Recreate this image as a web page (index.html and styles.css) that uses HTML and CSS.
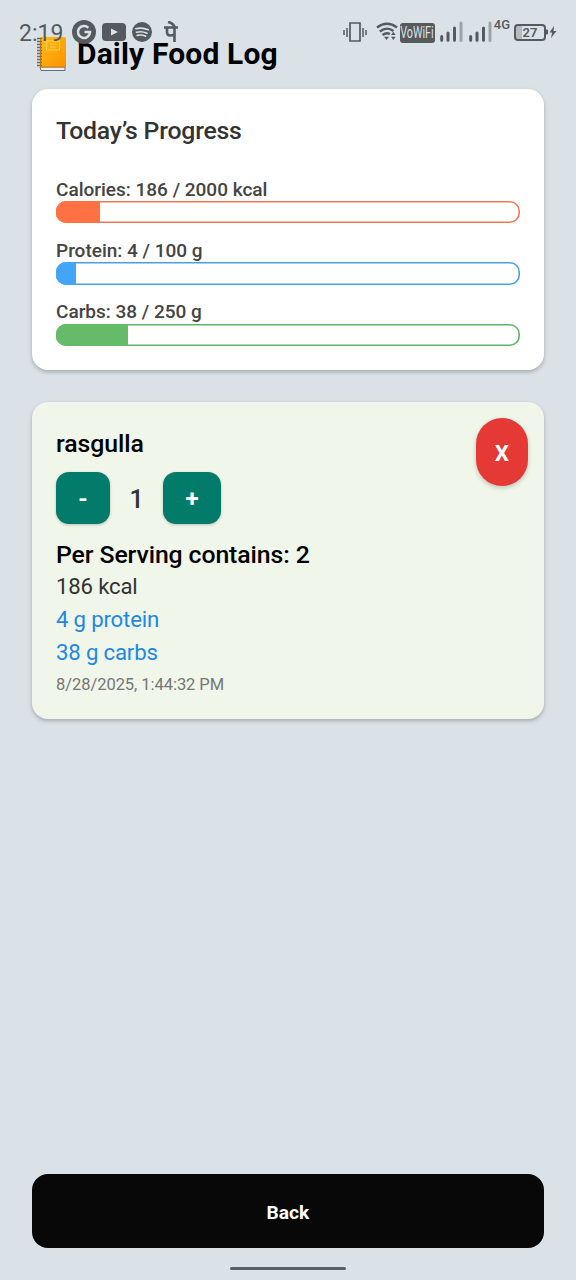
FILE: index.html
```html
<!DOCTYPE html>
<html lang="en">
<head>
<meta charset="utf-8">
<title>Daily Food Log</title>
<link rel="stylesheet" href="styles.css">
</head>
<body>
<div class="screen">
  <header class="title">
    <svg class="book" width="32" height="36" viewBox="0 0 32 36">
      <defs><linearGradient id="cover" x1="0" y1="0" x2="1" y2="1"><stop offset="0" stop-color="#ffbd16"/><stop offset="1" stop-color="#fb9200"/></linearGradient></defs>
      <path d="M4 31h25v3.500H5z" fill="#f1f1f4" stroke="#5d7187" stroke-width="1"/>
      <path d="M4 1h24.500q1.500 0 1.500 1.500v28.500H4z" fill="url(#cover)"/>
      <path d="M4 31h25.500" stroke="#c87a16" stroke-width="1"/>
      <path d="M10.500 5h13v9h-13zM14 8h6M14 11h6" fill="none" stroke="#ffd050" stroke-width="1.100"/>
      <path d="M1 2.500h5M1 5.500h5M1 8.500h5M1 11.500h5M1 14.500h5M1 17.500h5M1 20.500h5M1 23.500h5M1 26.500h5M1 29.500h5" stroke="#656b68" stroke-width="1.300"/>
      <path d="M4.500 2v32" stroke="#a87828" stroke-width="1"/>
    </svg>
    <h1>Daily Food Log</h1>
  </header>

  <section class="card progress">
    <h2>Today’s Progress</h2>
    <div class="meter calories"><span class="label">Calories: 186 / 2000 kcal</span><div class="track"><div class="fill" style="width:9.300%"></div></div></div>
    <div class="meter protein"><span class="label">Protein: 4 / 100 g</span><div class="track"><div class="fill" style="width:4%"></div></div></div>
    <div class="meter carbs"><span class="label">Carbs: 38 / 250 g</span><div class="track"><div class="fill" style="width:15.200%"></div></div></div>
  </section>

  <section class="card entry">
    <div class="details">
      <h3 class="food">rasgulla</h3>
      <div class="stepper"><button class="step minus">-</button><span class="count">1</span><button class="step plus">+</button></div>
      <p class="serving">Per Serving contains: 2</p>
      <p class="fact">186 kcal</p>
      <p class="fact macro">4 g protein</p>
      <p class="fact macro">38 g carbs</p>
      <p class="date">8/28/2025, 1:44:32 PM</p>
    </div>
    <button class="remove">X</button>
  </section>

  <button class="back">Back</button>
  <div class="home-bar"></div>
</div>

<div class="status">
  <div class="status-left">
    <span class="time">2:19</span>
    <svg width="24" height="24" viewBox="0 0 24 24"><circle cx="12" cy="12" r="12" fill="#555a5e"/><path d="M16.300 7.800A6 6 0 1 0 18 12h-5.500" fill="none" stroke="#dae2e8" stroke-width="2.600"/></svg>
    <svg width="24" height="18" viewBox="0 0 24 18"><rect width="24" height="18" rx="4" fill="#555a5e"/><path d="M9 5.500l7 3.500-7 3.500z" fill="#dae2e8"/></svg>
    <svg width="20" height="20" viewBox="0 0 20 20"><circle cx="10" cy="10" r="10" fill="#555a5e"/><path d="M3.800 6.800q6.500-1.800 12.500 1M4.500 10.200q5.500-1.400 10.500 1M5.200 13.400q4.500-1.100 8.500.8" fill="none" stroke="#dae2e8" stroke-width="1.600" stroke-linecap="round"/></svg>
    <svg class="pe" width="16" height="22" viewBox="0 0 16 22"><path d="M1 6.500h14M4 6.500v4.500q0 3.500 3 3.500 2.500 0 4.500-1.200M11.500 6.500V21M11.500 6Q10 2 5 1" fill="none" stroke="#555a5e" stroke-width="2.600"/></svg>
  </div>
  <div class="status-right">
    <svg class="vibrate" width="24" height="20" viewBox="0 0 24 20"><path d="M7 1h10v18H7z" fill="none" stroke="#555a5e" stroke-width="1.700"/><path d="M4 6v9M20 6v9M1 8v5M23 8v5" stroke="#555a5e" stroke-width="1.500"/></svg>
    <svg class="wifi" width="22" height="19" viewBox="0 0 22 19"><path d="M1 5.500Q11-2 21 5.500M3.800 9.500Q11 4 17.500 9M6.500 13Q10.500 10 14 12" fill="none" stroke="#555a5e" stroke-width="2.400"/><path d="M8 14.800h5L10.500 18zM15 13l2.300-3.200 2.300 3.200zM15 14.800h4.600l-2.300 3.200z" fill="#555a5e"/></svg>
    <span class="vowifi"><span>VoWiFi</span></span>
    <svg class="signal" width="23" height="21" viewBox="0 0 23 21"><path d="M1.700 15.500v3.800M8 12v7.300M14.500 7v12.300" stroke="#555a5e" stroke-width="3" stroke-linecap="round"/><path d="M21 2v17.500" stroke="#9da2a7" stroke-width="3" stroke-linecap="round"/></svg>
    <svg class="signal two" width="23" height="21" viewBox="0 0 23 21"><path d="M1.700 15.500v3.800M8 12v7.300M14.500 7v12.300" stroke="#555a5e" stroke-width="3" stroke-linecap="round"/><path d="M21 2v17.500" stroke="#9da2a7" stroke-width="3" stroke-linecap="round"/></svg>
    <span class="net">4G</span>
    <span class="battery">27</span>
    <svg class="bolt" width="11" height="14" viewBox="0 0 11 14"><path d="M0 4.500h1q1 0 1 1v3q0 1-1 1H0zM8 1L3.500 7.500h2.600L5 13 10.500 6H7.500z" fill="#555a5e"/></svg>
  </div>
</div>
</body>
</html>
```
FILE: styles.css
```css
* { box-sizing: border-box; margin: 0; padding: 0; }
body { background: #dae2e8; font-family: Roboto, sans-serif; color: #000; }
button { border: 0; font-family: inherit; color: #fff; font-weight: 700; }
.screen { position: relative; width: 576px; height: 1280px; padding: 36px 32px 8px; display: flex; flex-direction: column; }
.title { display: flex; align-items: center; height: 36px; padding-left: 4px; gap: 9px; flex: none; }
h1 { font-size: 30px; font-weight: 700; line-height: 36px; letter-spacing: .16px; white-space: nowrap; }
.card { border-radius: 16px; box-shadow: 0 2px 4px rgba(0,0,0,.25); flex: none; }
.progress { margin-top: 17px; height: 281px; padding: 26px 24px 0; background: #fff; }
h2 { font-size: 24.800px; font-weight: 500; line-height: 31px; letter-spacing: -.22px; color: #333; margin-bottom: 32px; }
.meter { height: 61.300px; display: flex; flex-direction: column; }
.label { font-size: 19px; line-height: 23px; font-weight: 500; color: #444; }
.carbs .label { line-height: 22px; padding-bottom: 1px; }
.track { height: 22.400px; border-radius: 10px; overflow: hidden; flex: none; box-shadow: inset 0 0 0 1.600px var(--edge); }
.fill { box-sizing: content-box; height: 100%; background: var(--tone); border-left: 1px solid var(--tone); }
.calories { --tone: #ff7043; --edge: #ed7956; }
.protein { --tone: #42a5f5; --edge: #4ca0dd; }
.carbs { --tone: #66bb6a; --edge: #60b36c; }
.entry { margin-top: 32px; height: 316.500px; background: #f0f6e9; padding: 16px 16px 0 24px; display: flex; justify-content: space-between; align-items: flex-start; }
.details { padding-top: 10px; }
.food { font-size: 24.800px; line-height: 32px; font-weight: 500; letter-spacing: -.05px; }
.stepper { display: flex; align-items: center; margin-top: 12px; height: 52px; }
.step { height: 52px; border-radius: 13px; background: #037b6b; font-size: 24px; padding-top: 2px; box-shadow: 0 1px 3px rgba(0,0,0,.22); }
.minus { width: 54px; }
.plus { width: 58px; }
.count { width: 53px; padding-top: 2px; text-align: center; font-size: 25px; font-weight: 500; color: #333; }
.serving { margin-top: 15px; font-size: 24.800px; line-height: 32px; font-weight: 500; letter-spacing: -.1px; }
.fact { font-size: 22.200px; line-height: 33px; letter-spacing: -.18px; color: #333; }
.fact:nth-of-type(2) { margin-top: -1px; }
.macro { color: #1e88e5; }
.date { font-size: 16.500px; line-height: 31px; letter-spacing: -.05px; color: #777; }
.remove { width: 52px; height: 68px; padding-top: 2px; border-radius: 26px; background: #e53935; font-size: 22.500px; box-shadow: 0 2px 5px rgba(0,0,0,.2); }
.back { margin-top: auto; height: 74px; padding-top: 2px; border-radius: 16px; background: #080808; font-size: 19.200px; flex: none; }
.home-bar { width: 116px; height: 3px; border-radius: 2px; background: #596066; margin: 19px auto 2px; flex: none; }
.status { position: absolute; left: 0; top: 16px; width: 576px; height: 32px; padding: 0 19px; display: flex; justify-content: space-between; color: #555a5e; }
.status-left, .status-right { display: flex; align-items: center; }
.time { font-size: 23px; width: 53px; padding-top: 2px; }
.status-left svg { margin-right: 6px; }
.status-left .pe { margin: 0 0 0 5px; }
.wifi { margin: -2px 0 0 9px; }
.vibrate { margin-top: -1px; }
.vowifi { width: 35px; height: 20px; margin: 1px 5px 0 2px; border-radius: 3px; background: #555a5e; color: #dae2e8; display: flex; align-items: center; justify-content: center; font-size: 16px; }
.vowifi span { transform: scaleX(.67); }
.signal { margin-top: -2px; }
.signal.two { margin-left: 6px; }
.net { font-size: 13px; line-height: 14px; font-weight: 500; align-self: flex-start; margin: 2px 4px 0 2px; }
.battery { width: 32px; height: 17px; border: 2px solid #555a5e; border-radius: 4px; background: linear-gradient(90deg, #b5bbc0 6px, transparent 6px); font-size: 13px; line-height: 14px; text-align: center; font-weight: 600; }
```
